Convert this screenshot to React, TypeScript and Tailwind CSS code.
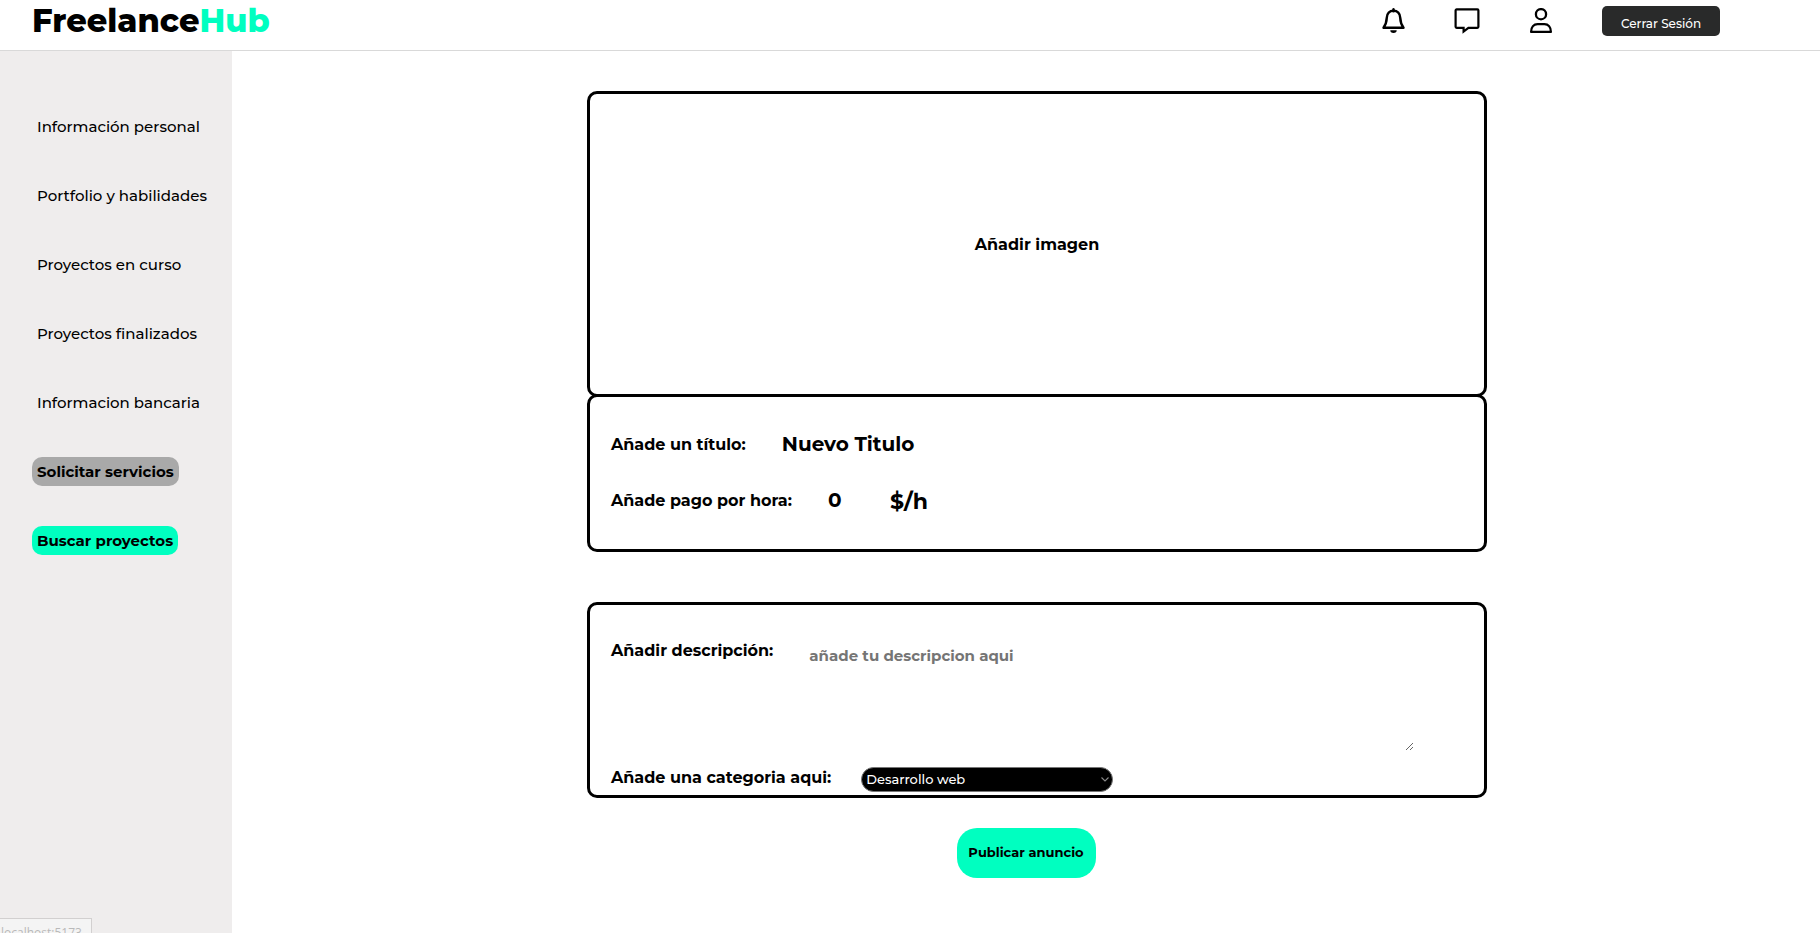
import React from "react";

const navItems = [
  "Información personal",
  "Portfolio y habilidades",
  "Proyectos en curso",
  "Proyectos finalizados",
  "Informacion bancaria",
];

function BellIcon() {
  return (
    <svg viewBox="0 0 26 26" className="size-[26px]" fill="none" stroke="currentColor" strokeWidth="2.4" strokeLinejoin="round" strokeLinecap="round" aria-hidden="true">
      <path d="M13.5 1.2v2" />
      <path d="M13.5 2.8C9.5 2.8 7 5.6 6.8 9.6C6.6 14.2 5.7 16.6 3.5 19.7H23.5C21.3 16.6 20.4 14.2 20.2 9.6C20 5.6 17.5 2.8 13.5 2.8Z" />
      <path d="M10.3 22.2h6.4a3.2 2.8 0 0 1-6.4 0Z" fill="currentColor" stroke="none" />
    </svg>
  );
}

function ChatIcon() {
  return (
    <svg viewBox="0 0 26 26" className="size-[26px]" fill="none" stroke="currentColor" strokeWidth="2.2" strokeLinejoin="miter" aria-hidden="true">
      <path d="M2.6 1.4H23.4a1 1 0 0 1 1 1V18.8a1 1 0 0 1-1 1H14.4L9.6 23.6V19.8H2.6a1 1 0 0 1-1-1V2.4A1 1 0 0 1 2.6 1.4Z" />
    </svg>
  );
}

function UserIcon() {
  return (
    <svg viewBox="0 0 26 26" className="size-[26px]" fill="none" stroke="currentColor" strokeWidth="2.3" strokeLinejoin="round" aria-hidden="true">
      <circle cx="13" cy="6.2" r="5.1" />
      <path d="M3.1 23.9C3.1 19.2 5.8 16.2 9.6 16.2H16.4C20.2 16.2 22.9 19.2 22.9 23.9Z" />
    </svg>
  );
}

export default function App() {
  return (
    <div className="flex min-h-screen flex-col bg-white font-['Montserrat','Inter',sans-serif] text-black">
      <header className="flex h-[51px] shrink-0 items-start justify-between border-b border-[#d9d9d9] pl-8 pr-[100px]">
        <a href="#" className="text-[32px] leading-[42px] font-extrabold">
          Freelance<span className="text-[#00ffc0]">Hub</span>
        </a>
        <div className="flex items-center pt-[6px]">
          <div className="flex gap-12 pr-12">
            <button type="button" aria-label="Notificaciones"><BellIcon /></button>
            <button type="button" aria-label="Mensajes"><ChatIcon /></button>
            <button type="button" aria-label="Perfil"><UserIcon /></button>
          </div>
          <button type="button" className="h-[30px] w-[118px] rounded-[5px] bg-[#292a2a] pt-[5px] text-[12px] font-medium text-white">
            Cerrar Sesión
          </button>
        </div>
      </header>

      <div className="flex grow">
        <nav className="flex w-[232px] shrink-0 flex-col items-start gap-10 bg-[#efeded] pt-[61px] pl-8 text-[15px] leading-[29px] font-medium">
          {navItems.map((item) => (
            <a key={item} href="#" className="px-[5px] whitespace-nowrap">{item}</a>
          ))}
          <a href="#" className="rounded-[10px] bg-[#a9a9a9] px-[5px] font-bold whitespace-nowrap">Solicitar servicios</a>
          <a href="#" className="rounded-[10px] bg-[#00ffc0] px-[5px] font-bold whitespace-nowrap">Buscar proyectos</a>
        </nav>

        <main className="flex grow flex-col items-center pt-10">
          <form className="flex w-full flex-col items-center" onSubmit={(e) => e.preventDefault()}>
            <div className="w-full max-w-[922px] pl-[22px] font-bold">
              <label className="flex h-[306px] cursor-pointer items-center justify-center rounded-[10px] border-3 border-black pt-[2px] text-[16px]">
                Añadir imagen
                <input type="file" className="sr-only" />
              </label>

              <section className="-mt-[3px] flex h-[158px] flex-col gap-6 rounded-[10px] border-3 border-black px-[21px] pt-8 text-[16px]">
                <div className="flex h-8 items-center gap-9">
                  <label htmlFor="titulo">Añade un título:</label>
                  <input id="titulo" defaultValue="Nuevo Titulo" className="w-60 pb-[2px] text-[20px] leading-7 outline-none" />
                </div>
                <div className="flex h-8 items-center gap-9">
                  <label htmlFor="pago">Añade pago por hora:</label>
                  <input id="pago" defaultValue="0" className="w-[26px] pb-[2px] text-[20px] leading-7 outline-none" />
                  <span className="text-[22px]">$/h</span>
                </div>
              </section>

              <section className="mt-[50px] flex h-[196px] flex-col rounded-[10px] border-3 border-black px-[21px] pt-[30px] text-[16px]">
                <div className="flex h-[118px] items-start gap-8">
                  <label htmlFor="descripcion" className="leading-8">Añadir descripción:</label>
                  <textarea id="descripcion" placeholder="añade tu descripcion aqui" className="h-[116px] w-[609px] resize p-1 pt-[9px] text-[15px] leading-6 outline-none placeholder:text-[#757575]" />
                </div>
                <div className="flex items-start gap-[30px] pt-[14px]">
                  <label htmlFor="categoria" className="leading-[22px]">Añade una categoria aqui:</label>
                  <div className="grid w-[252px] items-center">
                    <select id="categoria" className="col-start-1 row-start-1 h-[25px] w-full appearance-none rounded-full border border-[#767676] bg-black pl-1 text-[13px] font-medium text-white">
                      <option>Desarrollo web</option>
                    </select>
                    <svg viewBox="0 0 8 5" className="pointer-events-none col-start-1 row-start-1 mr-1 h-[5px] w-2 justify-self-end" fill="none" stroke="#8a8a8a" strokeWidth="1.1" aria-hidden="true">
                      <path d="M0.5 0.5L4 4L7.5 0.5" />
                    </svg>
                  </div>
                </div>
              </section>
            </div>
            <button type="submit" className="mt-[30px] h-[50px] w-[139px] rounded-[20px] bg-[#00ffc0] text-[13px] font-bold">
              Publicar anuncio
            </button>
          </form>
        </main>
      </div>

      <div className="fixed bottom-0 left-0 h-[15px] w-[92px] overflow-hidden border-t border-r border-[#d2d0d0] bg-[#f4f4f4] pt-[6px] pl-px font-['Open_Sans',sans-serif] text-[12px] leading-4 text-[#b9b9b9]">
        localhost:5173
      </div>
    </div>
  );
}
